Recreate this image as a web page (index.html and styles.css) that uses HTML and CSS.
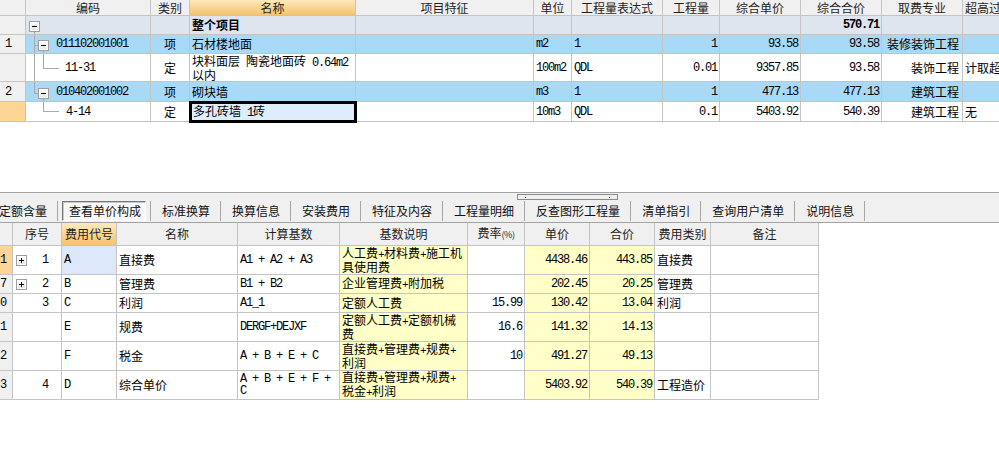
FILE: index.html
```html
<!DOCTYPE html>
<html lang="zh">
<head>
<meta charset="utf-8">
<title>单价构成</title>
<link rel="stylesheet" href="styles.css">
</head>
<body>
<section class="top">
  <div class="tr th">
    <div class="c"></div>
    <div class="c ctr">编码</div>
    <div class="c ctr">类别</div>
    <div class="c ctr hot">名称</div>
    <div class="c ctr">项目特征</div>
    <div class="c ctr">单位</div>
    <div class="c ctr">工程量表达式</div>
    <div class="c ctr">工程量</div>
    <div class="c ctr">综合单价</div>
    <div class="c ctr">综合合价</div>
    <div class="c ctr">取费专业</div>
    <div class="c">超高过滤类别</div>
  </div>
  <div class="tr ra whole">
    <div class="c n"></div>
    <div class="c code"><i class="tg a0"></i><i class="ln v a1"></i></div>
    <div class="c"></div>
    <div class="c b">整个项目</div>
    <div class="c"></div>
    <div class="c"></div>
    <div class="c"></div>
    <div class="c"></div>
    <div class="c"></div>
    <div class="c r m b">570.71</div>
    <div class="c"></div>
    <div class="c"></div>
  </div>
  <div class="tr rb blue">
    <div class="c n">1</div>
    <div class="c code m lv1"><i class="ln v b1"></i><i class="ln h b2"></i><i class="tg b3"></i><i class="ln v b4"></i>011102001001</div>
    <div class="c ctr">项</div>
    <div class="c">石材楼地面</div>
    <div class="c"></div>
    <div class="c m">m2</div>
    <div class="c m">1</div>
    <div class="c r m">1</div>
    <div class="c r m">93.58</div>
    <div class="c r m">93.58</div>
    <div class="c r">装修装饰工程</div>
    <div class="c"></div>
  </div>
  <div class="tr rc">
    <div class="c n"></div>
    <div class="c code m lv2"><i class="ln v b1"></i><i class="ln v c1"></i><i class="ln h c2"></i>11-31</div>
    <div class="c ctr">定</div>
    <div class="c w"><span>块料面层<span class="m"> </span>陶瓷地面砖<span class="m"> 0.64m2 </span>以内</span></div>
    <div class="c"></div>
    <div class="c m">100m2</div>
    <div class="c m">QDL</div>
    <div class="c r m">0.01</div>
    <div class="c r m">9357.85</div>
    <div class="c r m">93.58</div>
    <div class="c r">装饰工程</div>
    <div class="c">计取超高费</div>
  </div>
  <div class="tr rd blue">
    <div class="c n">2</div>
    <div class="c code m lv1"><i class="ln v d1"></i><i class="ln h d2"></i><i class="tg d3"></i><i class="ln v d4"></i>010402001002</div>
    <div class="c ctr">项</div>
    <div class="c">砌块墙</div>
    <div class="c"></div>
    <div class="c m">m3</div>
    <div class="c m">1</div>
    <div class="c r m">1</div>
    <div class="c r m">477.13</div>
    <div class="c r m">477.13</div>
    <div class="c r">建筑工程</div>
    <div class="c"></div>
  </div>
  <div class="tr re">
    <div class="c n cur"></div>
    <div class="c code m lv2b"><i class="ln v e1"></i><i class="ln h e2"></i>4-14</div>
    <div class="c ctr">定</div>
    <div class="c edit"><span>多孔砖墙<span class="m"> 1</span>砖</span></div>
    <div class="c"></div>
    <div class="c m">10m3</div>
    <div class="c m">QDL</div>
    <div class="c r m">0.1</div>
    <div class="c r m">5403.92</div>
    <div class="c r m">540.39</div>
    <div class="c r">建筑工程</div>
    <div class="c">无</div>
  </div>
</section>

<nav class="tabs">
  <ul class="tablist">
    <li class="tab">定额含量</li>
    <li class="tab on"><span>查看单价构成</span></li>
    <li class="tab">标准换算</li>
    <li class="tab">换算信息</li>
    <li class="tab">安装费用</li>
    <li class="tab">特征及内容</li>
    <li class="tab">工程量明细</li>
    <li class="tab">反查图形工程量</li>
    <li class="tab">清单指引</li>
    <li class="tab">查询用户清单</li>
    <li class="tab">说明信息</li>
  </ul>
  <div class="grip"></div>
</nav>

<section class="bottom">
  <div class="tr th h23">
    <div class="c"></div>
    <div class="c ctr">序号</div>
    <div class="c ctr hot">费用代号</div>
    <div class="c ctr">名称</div>
    <div class="c ctr">计算基数</div>
    <div class="c ctr">基数说明</div>
    <div class="c ctr"><span>费率<small>(%)</small></span></div>
    <div class="c ctr">单价</div>
    <div class="c ctr">合价</div>
    <div class="c ctr">费用类别</div>
    <div class="c ctr">备注</div>
  </div>
  <div class="tr h29">
    <div class="c n2 cur m">1</div>
    <div class="c seq m"><i class="pl"></i><span>1</span></div>
    <div class="c m selc">A</div>
    <div class="c">直接费</div>
    <div class="c m">A1 + A2 + A3</div>
    <div class="c w yl"><span>人工费<b class="p">+</b>材料费<b class="p">+</b>施工机具使用费</span></div>
    <div class="c r m"></div>
    <div class="c r m yl">4438.46</div>
    <div class="c r m yl">443.85</div>
    <div class="c">直接费</div>
    <div class="c"></div>
  </div>
  <div class="tr h19">
    <div class="c n2 m">7</div>
    <div class="c seq m"><i class="pl"></i><span>2</span></div>
    <div class="c m">B</div>
    <div class="c">管理费</div>
    <div class="c m">B1 + B2</div>
    <div class="c w yl"><span>企业管理费<b class="p">+</b>附加税</span></div>
    <div class="c r m"></div>
    <div class="c r m yl">202.45</div>
    <div class="c r m yl">20.25</div>
    <div class="c">管理费</div>
    <div class="c"></div>
  </div>
  <div class="tr h19">
    <div class="c n2 m">0</div>
    <div class="c seq m"><span>3</span></div>
    <div class="c m">C</div>
    <div class="c">利润</div>
    <div class="c m">A1_1</div>
    <div class="c w yl">定额人工费</div>
    <div class="c r m">15.99</div>
    <div class="c r m yl">130.42</div>
    <div class="c r m yl">13.04</div>
    <div class="c">利润</div>
    <div class="c"></div>
  </div>
  <div class="tr h29">
    <div class="c n2 m">1</div>
    <div class="c seq m"></div>
    <div class="c m">E</div>
    <div class="c">规费</div>
    <div class="c m">DERGF+DEJXF</div>
    <div class="c w yl"><span>定额人工费<b class="p">+</b>定额机械费</span></div>
    <div class="c r m">16.6</div>
    <div class="c r m yl">141.32</div>
    <div class="c r m yl">14.13</div>
    <div class="c"></div>
    <div class="c"></div>
  </div>
  <div class="tr h29">
    <div class="c n2 m">2</div>
    <div class="c seq m"></div>
    <div class="c m">F</div>
    <div class="c">税金</div>
    <div class="c m">A + B + E + C</div>
    <div class="c w yl"><span>直接费<b class="p">+</b>管理费<b class="p">+</b>规费<b class="p">+</b>利润</span></div>
    <div class="c r m">10</div>
    <div class="c r m yl">491.27</div>
    <div class="c r m yl">49.13</div>
    <div class="c"></div>
    <div class="c"></div>
  </div>
  <div class="tr h29">
    <div class="c n2 m">3</div>
    <div class="c seq m"><span>4</span></div>
    <div class="c m">D</div>
    <div class="c">综合单价</div>
    <div class="c m w">A + B + E + F + C</div>
    <div class="c w yl"><span>直接费<b class="p">+</b>管理费<b class="p">+</b>规费<b class="p">+</b>税金<b class="p">+</b>利润</span></div>
    <div class="c r m"></div>
    <div class="c r m yl">5403.92</div>
    <div class="c r m yl">540.39</div>
    <div class="c">工程造价</div>
    <div class="c"></div>
  </div>
</section>
</body>
</html>
```

FILE: styles.css
```css
* { box-sizing: border-box; margin: 0; padding: 0; }

body {
  width: 999px;
  height: 457px;
  overflow: hidden;
  background: #fff;
  color: #000;
  font-family: "Noto Sans CJK SC", "Noto Sans", sans-serif;
  font-size: 12px;
  line-height: 12px;
}

/* ---------- generic grid rows / cells ---------- */
.tr { display: grid; }

.c {
  display: flex;
  align-items: center;
  overflow: hidden;
  white-space: nowrap;
  padding: 0 2px;
  border-right: 1px solid #c4c4c4;
  border-bottom: 1px solid #c4c4c4;
  position: relative;
}
.c.ctr { justify-content: center; }
.c.r { justify-content: flex-end; padding-right: 3px; }
.c.w { white-space: normal; }
.c.b, .b { font-weight: bold; }

.m {
  font-family: "Liberation Mono", monospace;
  font-size: 12px;
  letter-spacing: -1.2px;
}
.c.r.m { padding-right: 2px; }

.p {
  font-weight: normal;
  display: inline-block;
  width: 6px;
  text-align: center;
  font-family: "Liberation Mono", monospace;
  font-size: 11px;
}

.th { background: #f0f0f0; color: #1e1e1e; }
.th small { font-size: 9px; letter-spacing: -0.5px; }
.hot { background: linear-gradient(#fde9c0, #f4c36b); }

/* ---------- top grid ---------- */
.top {
  height: 193px;
  border-bottom: 1px solid #a3a3a3;
  overflow: hidden;
}
.top .tr {
  grid-template-columns: 26px 125px 39px 166px 178px 38px 91px 57px 81px 81px 81px 130px;
  width: 1063px;
}
.top .th { height: 16px; }
.top .ra { height: 19px; }
.top .rb { height: 19px; }
.top .rc { height: 28px; }
.top .rd { height: 20px; }
.top .re { height: 20px; }

.whole .c { background: #dee5ee; }
.blue .c { background: #a8daf8; }
.top .c.n { background: #f0f0f0; padding-left: 5px; font-family: "Liberation Mono", monospace; font-size: 12px; }
.top .c.n.cur, .c.cur { background: #fdd696; }

.code.lv1 { padding-left: 30px; }
.code.lv2 { padding-left: 39px; }
.code.lv2b { padding-left: 40px; }

.edit {
  background: #deedfc;
  outline: 3px solid #000;
  outline-offset: -2px;
  z-index: 2;
  padding-left: 3px;
}

/* tree connectors */
.ln { position: absolute; background: #a9a9a9; display: block; }
.ln.v { width: 1px; }
.ln.h { height: 1px; }
.a1 { left: 8px; top: 16px; bottom: 0; }
.b1 { left: 8px; top: 0; bottom: 0; }
.b2 { left: 8px; top: 10px; width: 4px; }
.b4 { left: 17px; top: 16px; bottom: 0; }
.c1 { left: 17px; top: 0; height: 14px; }
.c2 { left: 17px; top: 14px; width: 16px; }
.d1 { left: 8px; top: 0; height: 11px; }
.d2 { left: 8px; top: 11px; width: 4px; }
.d4 { left: 17px; top: 17px; bottom: 0; }
.e1 { left: 17px; top: 0; height: 9px; }
.e2 { left: 17px; top: 9px; width: 16px; }

.tg, .pl {
  display: block;
  width: 11px;
  height: 11px;
  border: 1px solid #9e9e9e;
  background: linear-gradient(#fbfbfb, #e4e4e4);
  box-shadow: inset 0 0 0 1px #fff;
}
.tg { position: absolute; }
.tg::after, .pl::after {
  content: "";
  position: absolute;
  left: 2px;
  top: 4px;
  width: 5px;
  height: 1px;
  background: #000;
}
.a0 { left: 3px; top: 5px; }
.b3 { left: 12px; top: 5px; }
.d3 { left: 12px; top: 6px; }

/* ---------- tab bar ---------- */
.tabs {
  position: relative;
  height: 30px;
  background: #f0f0f0;
  border-bottom: 1px solid #a3a3a3;
  padding-top: 8px;
  overflow: hidden;
}
.tablist {
  display: flex;
  list-style: none;
  margin-left: -12px;
}
.tab {
  height: 20px;
  display: flex;
  align-items: center;
  padding: 0 10px 0 11px;
  border-right: 1px solid #a6a6a6;
  white-space: nowrap;
  color: #111;
}
.tab.on { padding: 0 4px; }
.tab.on span {
  height: 20px;
  display: flex;
  align-items: center;
  padding: 0 4px 0 6px;
  border: 1px solid;
  border-color: #777 #fff #fff #777;
  box-shadow: inset 1px 1px 0 #c9c9c9;
  background: #f9f9f9;
}
.grip {
  position: absolute;
  left: 517px;
  top: 1px;
  width: 101px;
  height: 6px;
  border: 1px solid #8a8a8a;
  background: #f0f0f0;
}
.grip::before, .grip::after {
  content: "";
  position: absolute;
  top: 2px;
  width: 1px;
  height: 1px;
  background: #2040c0;
}
.grip::before { left: 7px; }
.grip::after { left: 91px; }

/* ---------- bottom grid ---------- */
.bottom .tr {
  grid-template-columns: 13px 49px 55px 121px 102px 128px 57px 65px 65px 56px 108px;
  width: 819px;
}
.h23 { height: 23px; }
.h29 { height: 29px; }
.h19 { height: 19px; }

.bottom .c.n2 { background: #f0f0f0; padding-left: 0; }
.bottom .c.n2.cur { background: #fdd696; }
.seq { padding: 0 13px 0 3px; }
.seq span { margin-left: auto; }
.pl { position: relative; }
.pl::before {
  content: "";
  position: absolute;
  left: 4px;
  top: 2px;
  width: 1px;
  height: 5px;
  background: #000;
}
.yl { background: #ffffc8; }
.selc { background: #dde9fa; }
```
